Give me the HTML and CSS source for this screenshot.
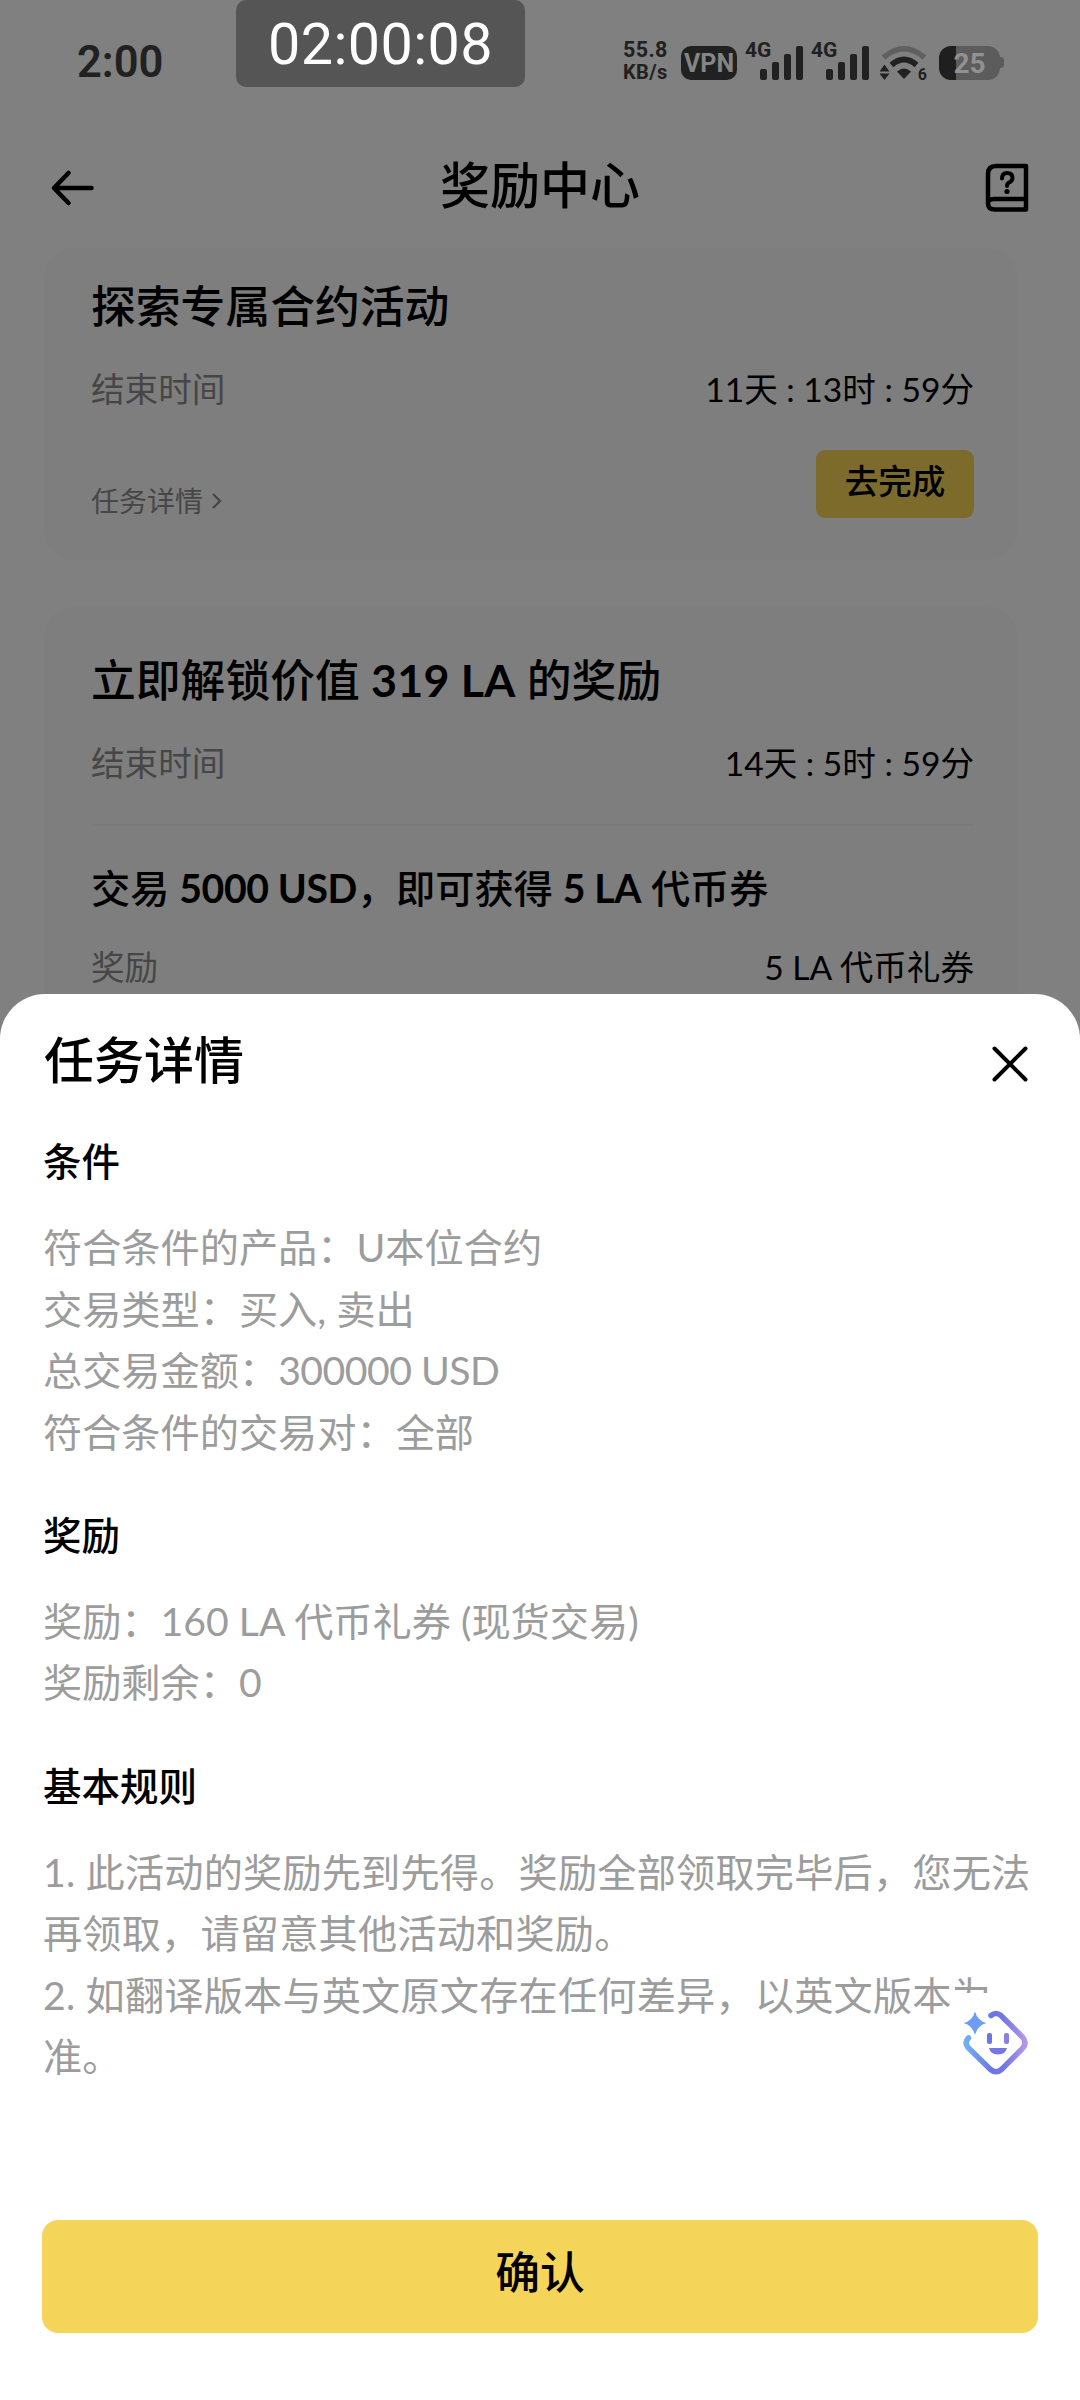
FILE: index.html
```html
<!DOCTYPE html>
<html lang="zh-CN">
<head>
<meta charset="utf-8">
<title>奖励中心</title>
<link rel="stylesheet" href="styles.css">
</head>
<body>
<div class="screen">
  <div class="status">
    <span class="clock">2:00</span>
    <div class="indicators">
      <div class="speed"><span>55.8</span><span>KB/s</span></div>
      <span class="vpn">VPN</span>
      <div class="signal"><span class="net">4G</span><i class="b1"></i><i class="b2"></i><i class="b3"></i><i class="b4"></i></div>
      <div class="signal"><span class="net">4G</span><i class="b1"></i><i class="b2"></i><i class="b3"></i><i class="b4"></i></div>
      <div class="wifi">
        <svg width="48" height="36" viewBox="0 0 48 36">
          <path d="M3.5 12.5Q24 -5 44.5 12.5" fill="none" stroke="#5f5f5f" stroke-width="5.5"/>
          <path d="M11.5 20Q24 9 36.5 20" fill="none" stroke="#212121" stroke-width="6"/>
          <path d="M17 26.500Q24 20.500 31 26.500L25 33Q24 34 23 33Z" fill="#212121"/>
          <path d="M4.500 19.500L9.500 26.500H-.5ZM4.500 35L-.5 28.500H9.500Z" fill="#212121"/>
        </svg>
        <span class="gen">6</span>
      </div>
      <div class="battery"><span>25</span></div>
    </div>
  </div>
  <div class="recorder">02:00:08</div>

  <header class="nav">
    <svg width="50" height="50" viewBox="0 0 50 50" fill="none" stroke="#000" stroke-width="4.500" stroke-linecap="round" stroke-linejoin="round"><path d="M43.500 25H6M20.500 10L6 25L20.500 40"/></svg>
    <h1>奖励中心</h1>
    <svg width="50" height="50" viewBox="0 0 50 50" fill="none" stroke="#000" stroke-width="4.500" stroke-linecap="round" stroke-linejoin="round"><path d="M6 40V11Q6 3 14 3H44V46.500H13Q6 46.500 6 40.500Q6 36 12 36H43"/><path d="M20 15.500Q20 10 25 10Q30.500 10 30.500 15Q30.500 18 27 19.500Q25 20.500 25 23" stroke-width="4"/><circle cx="25" cy="28.500" r="2.600" fill="#000" stroke="none"/></svg>
  </header>

  <main class="list">
    <section class="card first">
      <h2>探索专属合约活动</h2>
      <div class="row"><span class="muted">结束时间</span><span>11天 : 13时 : 59分</span></div>
      <div class="actions">
        <span class="detail">任务详情<svg width="14" height="20" viewBox="0 0 14 20" fill="none" stroke="#464646" stroke-width="2.200"><path d="M3 3L10 10L3 17"/></svg></span>
        <span class="go">去完成</span>
      </div>
    </section>
    <section class="card second">
      <h2>立即解锁价值 <b>319 LA</b> 的奖励</h2>
      <div class="row"><span class="muted">结束时间</span><span>14天 : 5时 : 59分</span></div>
      <div class="rule"></div>
      <h3>交易 <b>5000 USD</b>，即可获得 <b>5 LA</b> 代币券</h3>
      <div class="row"><span class="muted">奖励</span><span>5 LA 代币礼券</span></div>
    </section>
  </main>

  <div class="sheet">
    <div class="sheet-head">
      <h2>任务详情</h2>
      <svg width="40" height="40" viewBox="0 0 40 40" fill="none" stroke="#000" stroke-width="4" stroke-linecap="round"><path d="M4.500 4.500L35.500 35.500M35.500 4.500L4.500 35.500"/></svg>
    </div>
    <section class="block">
      <h3>条件</h3>
      <p>符合条件的产品：U本位合约</p>
      <p>交易类型：买入, 卖出</p>
      <p>总交易金额：<span class="amount">300000 USD</span></p>
      <p>符合条件的交易对：全部</p>
    </section>
    <section class="block">
      <h3>奖励</h3>
      <p>奖励：160 LA 代币礼券 (现货交易)</p>
      <p>奖励剩余：0</p>
    </section>
    <section class="block rules">
      <h3>基本规则</h3>
      <p>1. 此活动的奖励先到先得。奖励全部领取完毕后，您无法<br>再领取，请留意其他活动和奖励。</p>
      <p>2. 如翻译版本与英文原文存在任何差异，以英文版本为<br>准。</p>
    </section>
    <button class="confirm">确认</button>
  </div>

  <div class="assistant">
    <svg width="88" height="94" viewBox="952 1993 88 94">
      <defs><linearGradient id="g" x1="0" y1="0" x2="1" y2="0"><stop offset="0" stop-color="#6fb0f0"/><stop offset=".45" stop-color="#6c74e6"/><stop offset=".65" stop-color="#7478e0"/><stop offset="1" stop-color="#b297ea"/></linearGradient></defs>
      <path d="M991 2015.500Q996 2011.500 1001 2015.500L1022.500 2037Q1027.500 2043 1022.500 2048.500L1001.500 2069.500Q996 2074 990.500 2069.500L969 2048.500Q963.500 2043 968.500 2038" fill="none" stroke="url(#g)" stroke-width="5.500" stroke-linecap="round"/>
      <path d="M975 2011.500Q977.500 2021 986.500 2023Q977.500 2025.500 975 2035Q972.500 2025.500 963.500 2023Q972.500 2021 975 2011.500Z" fill="#6c9cf3"/>
      <rect x="987" y="2033" width="5" height="11" rx="2" fill="#6f74e4"/><rect x="1004" y="2033" width="5" height="11" rx="2" fill="#8a80e4"/>
      <path d="M989 2048H1007Q1005.500 2054.500 998 2054.500Q990.500 2054.500 989 2048Z" fill="#7478e6"/>
    </svg>
  </div>
</div>
</body>
</html>
```
FILE: styles.css
```css
* { box-sizing: border-box; margin: 0; padding: 0; }
body { background: #808080; }
h1, h2, h3 { font-weight: 500; white-space: nowrap; }
svg { display: block; flex: none; }
.screen {
  position: relative; width: 1080px; height: 2400px; overflow: hidden;
  display: flex; flex-direction: column;
  background: #808080; color: #000;
  font-family: Lato, "Noto Sans CJK SC", sans-serif;
}
.status {
  height: 126px; padding: 0 80px 0 77px; flex: none;
  display: flex; justify-content: space-between; align-items: center;
  font-family: Roboto, sans-serif; font-weight: 700; color: #212121;
}
.clock { font-size: 43.5px; font-weight: 600; line-height: 50px; }
.indicators { display: flex; align-items: center; }
.speed { width: 46px; display: flex; flex-direction: column; font-size: 21.5px; line-height: 23px; letter-spacing: .4px; margin: -4px 12px 0 0; white-space: nowrap; }
.speed span + span { font-size: 20px; }
.vpn { width: 56px; height: 34px; border-radius: 10px; background: #212121; color: #858585; font-size: 25px; line-height: 35px; text-align: center; margin-right: 8px; }
.signal { position: relative; width: 58px; height: 34px; margin-right: 8px; display: flex; justify-content: flex-end; align-items: flex-end; gap: 5px; }
.signal i { width: 7px; border-radius: 2px; background: #212121; }
.net { position: absolute; left: 0; top: -8px; font-size: 21px; line-height: 24px; }
.b1 { height: 11px; }
.b2 { height: 18px; }
.b3 { height: 26px; }
.b4 { height: 34px; }
.wifi { position: relative; width: 48px; height: 36px; margin: 0 11px 0 3px; }
.gen { position: absolute; right: 1px; bottom: -3px; font-size: 16px; line-height: 18px; }
.battery { position: relative; width: 61px; height: 34px; border-radius: 12px; background: linear-gradient(90deg, #1f1f1f 17px, #5c5c5c 17px); color: #919191; font-size: 28px; line-height: 35px; text-align: center; }
.battery::after { content: ""; position: absolute; right: -4px; top: 11px; width: 4px; height: 11px; border-radius: 0 3px 3px 0; background: #5c5c5c; }
.recorder {
  position: absolute; left: 236px; top: 0; width: 289px; height: 87px; border-radius: 10px;
  background: #555; color: #fff; text-align: center; letter-spacing: .4px;
  font: 400 57.5px/90px Roboto, sans-serif;
}
.nav { height: 122px; padding: 2px 48px 0; flex: none; display: flex; align-items: center; justify-content: space-between; }
.nav h1 { font-size: 50px; line-height: 60px; margin-top: -7px; }

.list { padding: 0 63px 0 44px; display: flex; flex-direction: column; gap: 47px; }
.card { background: #7e7e7e; padding: 0 43px 0 47px; border-radius: 30px; }
.first { height: 312px; padding-top: 28px; }
.second { padding-top: 43px; height: 420px; }
.card h2 { font-size: 44.8px; line-height: 60px; }
.card h2 b { letter-spacing: .2px; }
.row { display: flex; justify-content: space-between; font-size: 33.6px; line-height: 48px; margin-top: 29px; white-space: nowrap; }
.muted { color: #464646; }
.actions { display: flex; justify-content: space-between; align-items: flex-start; margin-top: 37px; }
.detail { display: flex; align-items: center; gap: 7px; color: #464646; font-size: 28px; line-height: 40px; margin-top: 31px; }
.go { width: 158px; height: 68px; border-radius: 9px; background: #7c6b2b; font-size: 33.6px; font-weight: 500; line-height: 62px; text-align: center; }
.rule { height: 2px; background: #7a7a7a; margin-top: 37px; }
.card h3 { font-size: 39.2px; line-height: 56px; margin-top: 34px; }
.card h3 b { letter-spacing: -.4px; }
.card h3 + .row { margin-top: 27px; }

.sheet {
  position: absolute; left: 0; top: 994px; width: 1080px; height: 1406px;
  background: #fff; border-radius: 45px 45px 0 0; padding: 0 42px;
  display: flex; flex-direction: column;
}
.sheet-head { height: 137px; padding: 0 8px 5px 2px; flex: none; display: flex; align-items: center; justify-content: space-between; }
.sheet-head h2 { font-size: 50px; line-height: 60px; }
.sheet-head svg { margin-top: 7px; }
.block { padding-left: 1px; margin-bottom: 42.500px; }
.block h3 { font-size: 38.5px; line-height: 61px; margin-bottom: 24px; }
.block p { font-size: 39.2px; line-height: 61.6px; color: #9c9c9c; white-space: nowrap; }
.amount { letter-spacing: -.5px; }
.rules p { letter-spacing: .18px; }
.confirm {
  width: 996px; height: 113px; flex: none; margin: auto 0 67px; border: 0; border-radius: 16px;
  background: #f4d55a; color: #000; padding-bottom: 9px;
  font: 500 44.8px/60px Lato, "Noto Sans CJK SC", sans-serif;
}
.assistant { position: absolute; left: 952px; top: 1993px; width: 88px; height: 94px; background: #fff; }
```
